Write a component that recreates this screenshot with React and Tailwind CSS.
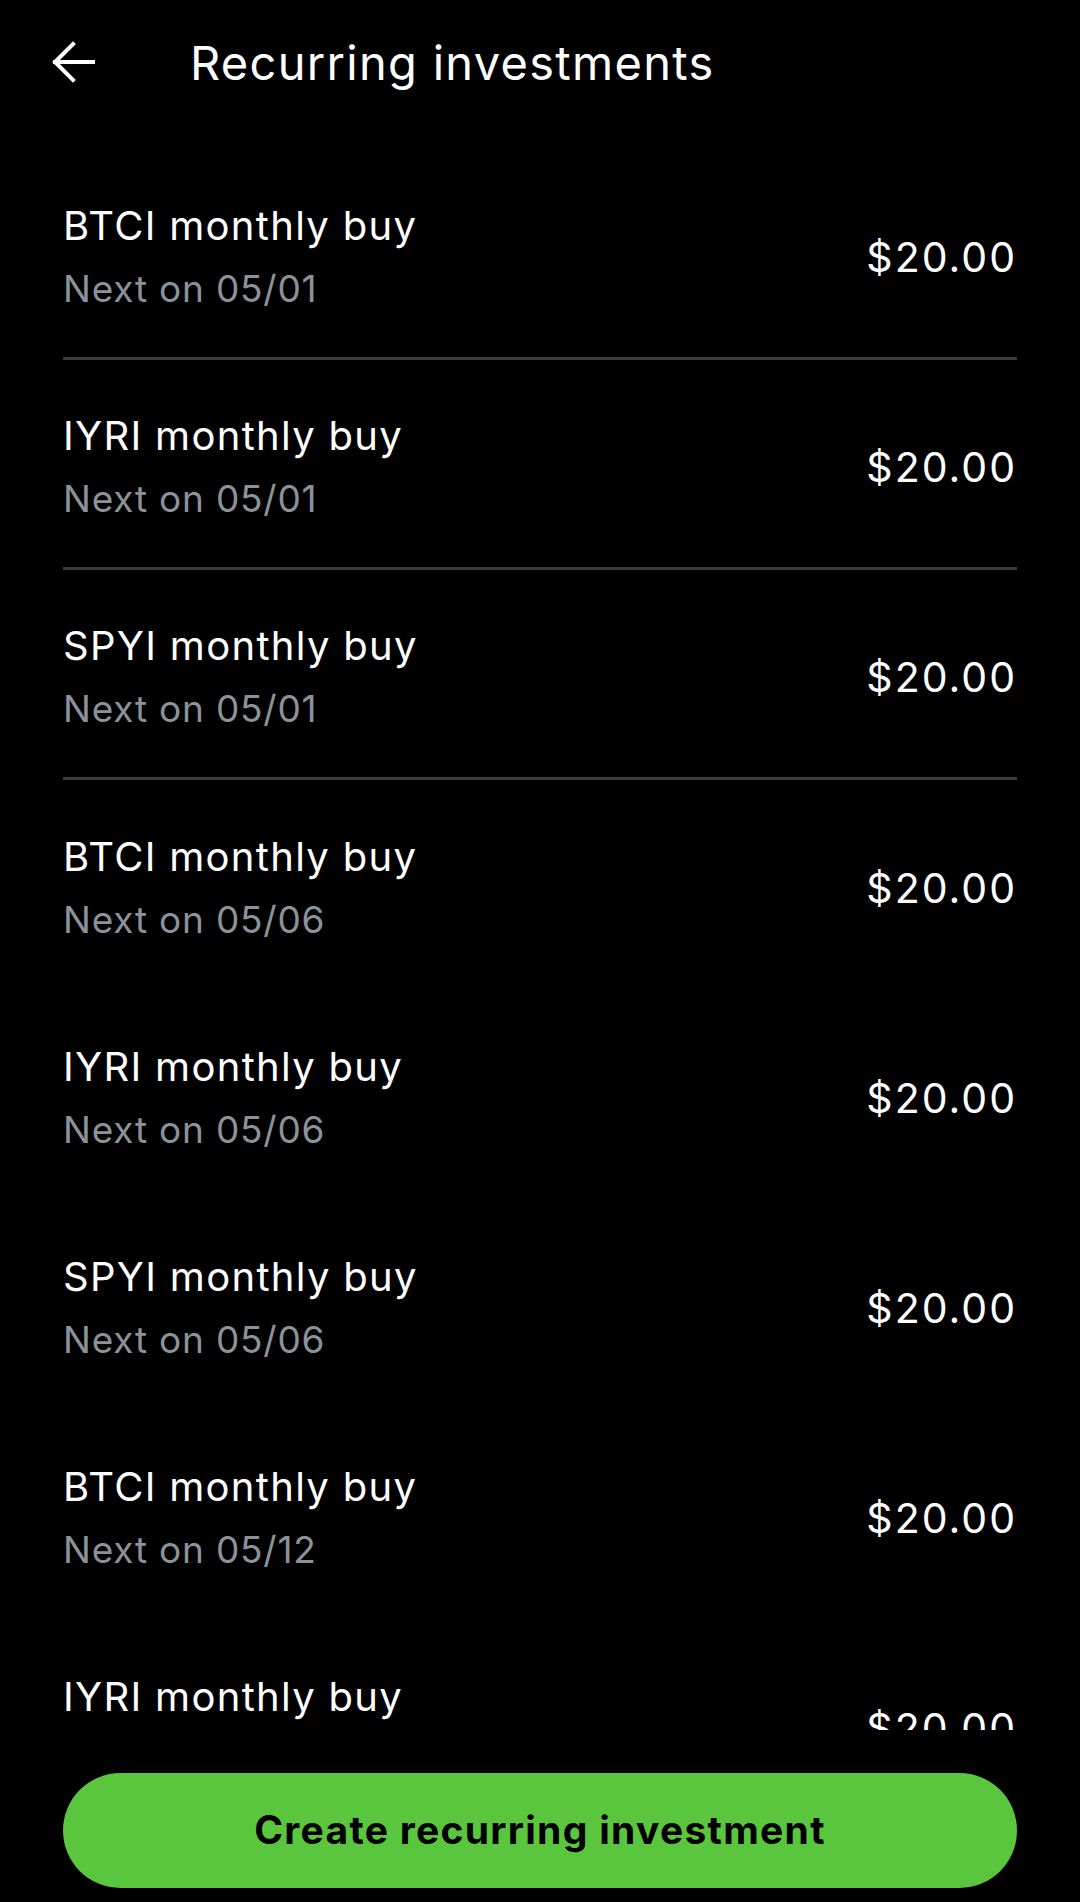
const plans = [
  { name: "BTCI monthly buy", next: "05/01", amount: "$20.00", divider: true },
  { name: "IYRI monthly buy", next: "05/01", amount: "$20.00", divider: true },
  { name: "SPYI monthly buy", next: "05/01", amount: "$20.00", divider: true },
  { name: "BTCI monthly buy", next: "05/06", amount: "$20.00" },
  { name: "IYRI monthly buy", next: "05/06", amount: "$20.00" },
  { name: "SPYI monthly buy", next: "05/06", amount: "$20.00" },
  { name: "BTCI monthly buy", next: "05/12", amount: "$20.00" },
  { name: "IYRI monthly buy", next: "05/12", amount: "$20.00" },
];

function BackArrow() {
  return (
    <svg width="48" height="48" viewBox="0 0 48 48" fill="none" stroke="white" strokeWidth="4" strokeLinecap="square">
      <path d="M4 21h38" />
      <path d="M22 3 4 21l18 18" />
    </svg>
  );
}

function PlanRow({ plan }) {
  return (
    <div className={`flex h-[210px] shrink-0 items-center justify-between pt-2 ${plan.divider ? "border-b-[3px] border-[#393c3f]" : ""}`}>
      <div className="flex flex-col">
        <span className="text-[40px] leading-[62px] tracking-[1.3px] text-white">{plan.name}</span>
        <span className="text-[37px] leading-[64px] tracking-[0.8px] text-[#8a9399]">Next on {plan.next}</span>
      </div>
      <span className="text-[41px] tracking-[2px] text-white">{plan.amount}</span>
    </div>
  );
}

export default function App() {
  return (
    <div className="flex h-[1902px] w-[1080px] flex-col bg-black font-['Inter',sans-serif]">
      <header className="flex h-[126px] shrink-0 items-center pl-[51px]">
        <div className="w-[139px] pt-[3px]">
          <BackArrow />
        </div>
        <h1 className="text-[47px] tracking-[1.3px] text-white">Recurring investments</h1>
      </header>

      <div className="mt-6 flex flex-1 flex-col overflow-hidden px-[63px]">
        {plans.map((plan, i) => (
          <PlanRow key={i} plan={plan} />
        ))}
      </div>

      <div className="shrink-0 px-[63px] pb-[14px] pt-[43px]">
        <button className="flex h-[115px] w-full items-center justify-center rounded-full bg-[#5ac63e] text-[39px] font-bold tracking-[1.3px] text-black">
          Create recurring investment
        </button>
      </div>
    </div>
  );
}
